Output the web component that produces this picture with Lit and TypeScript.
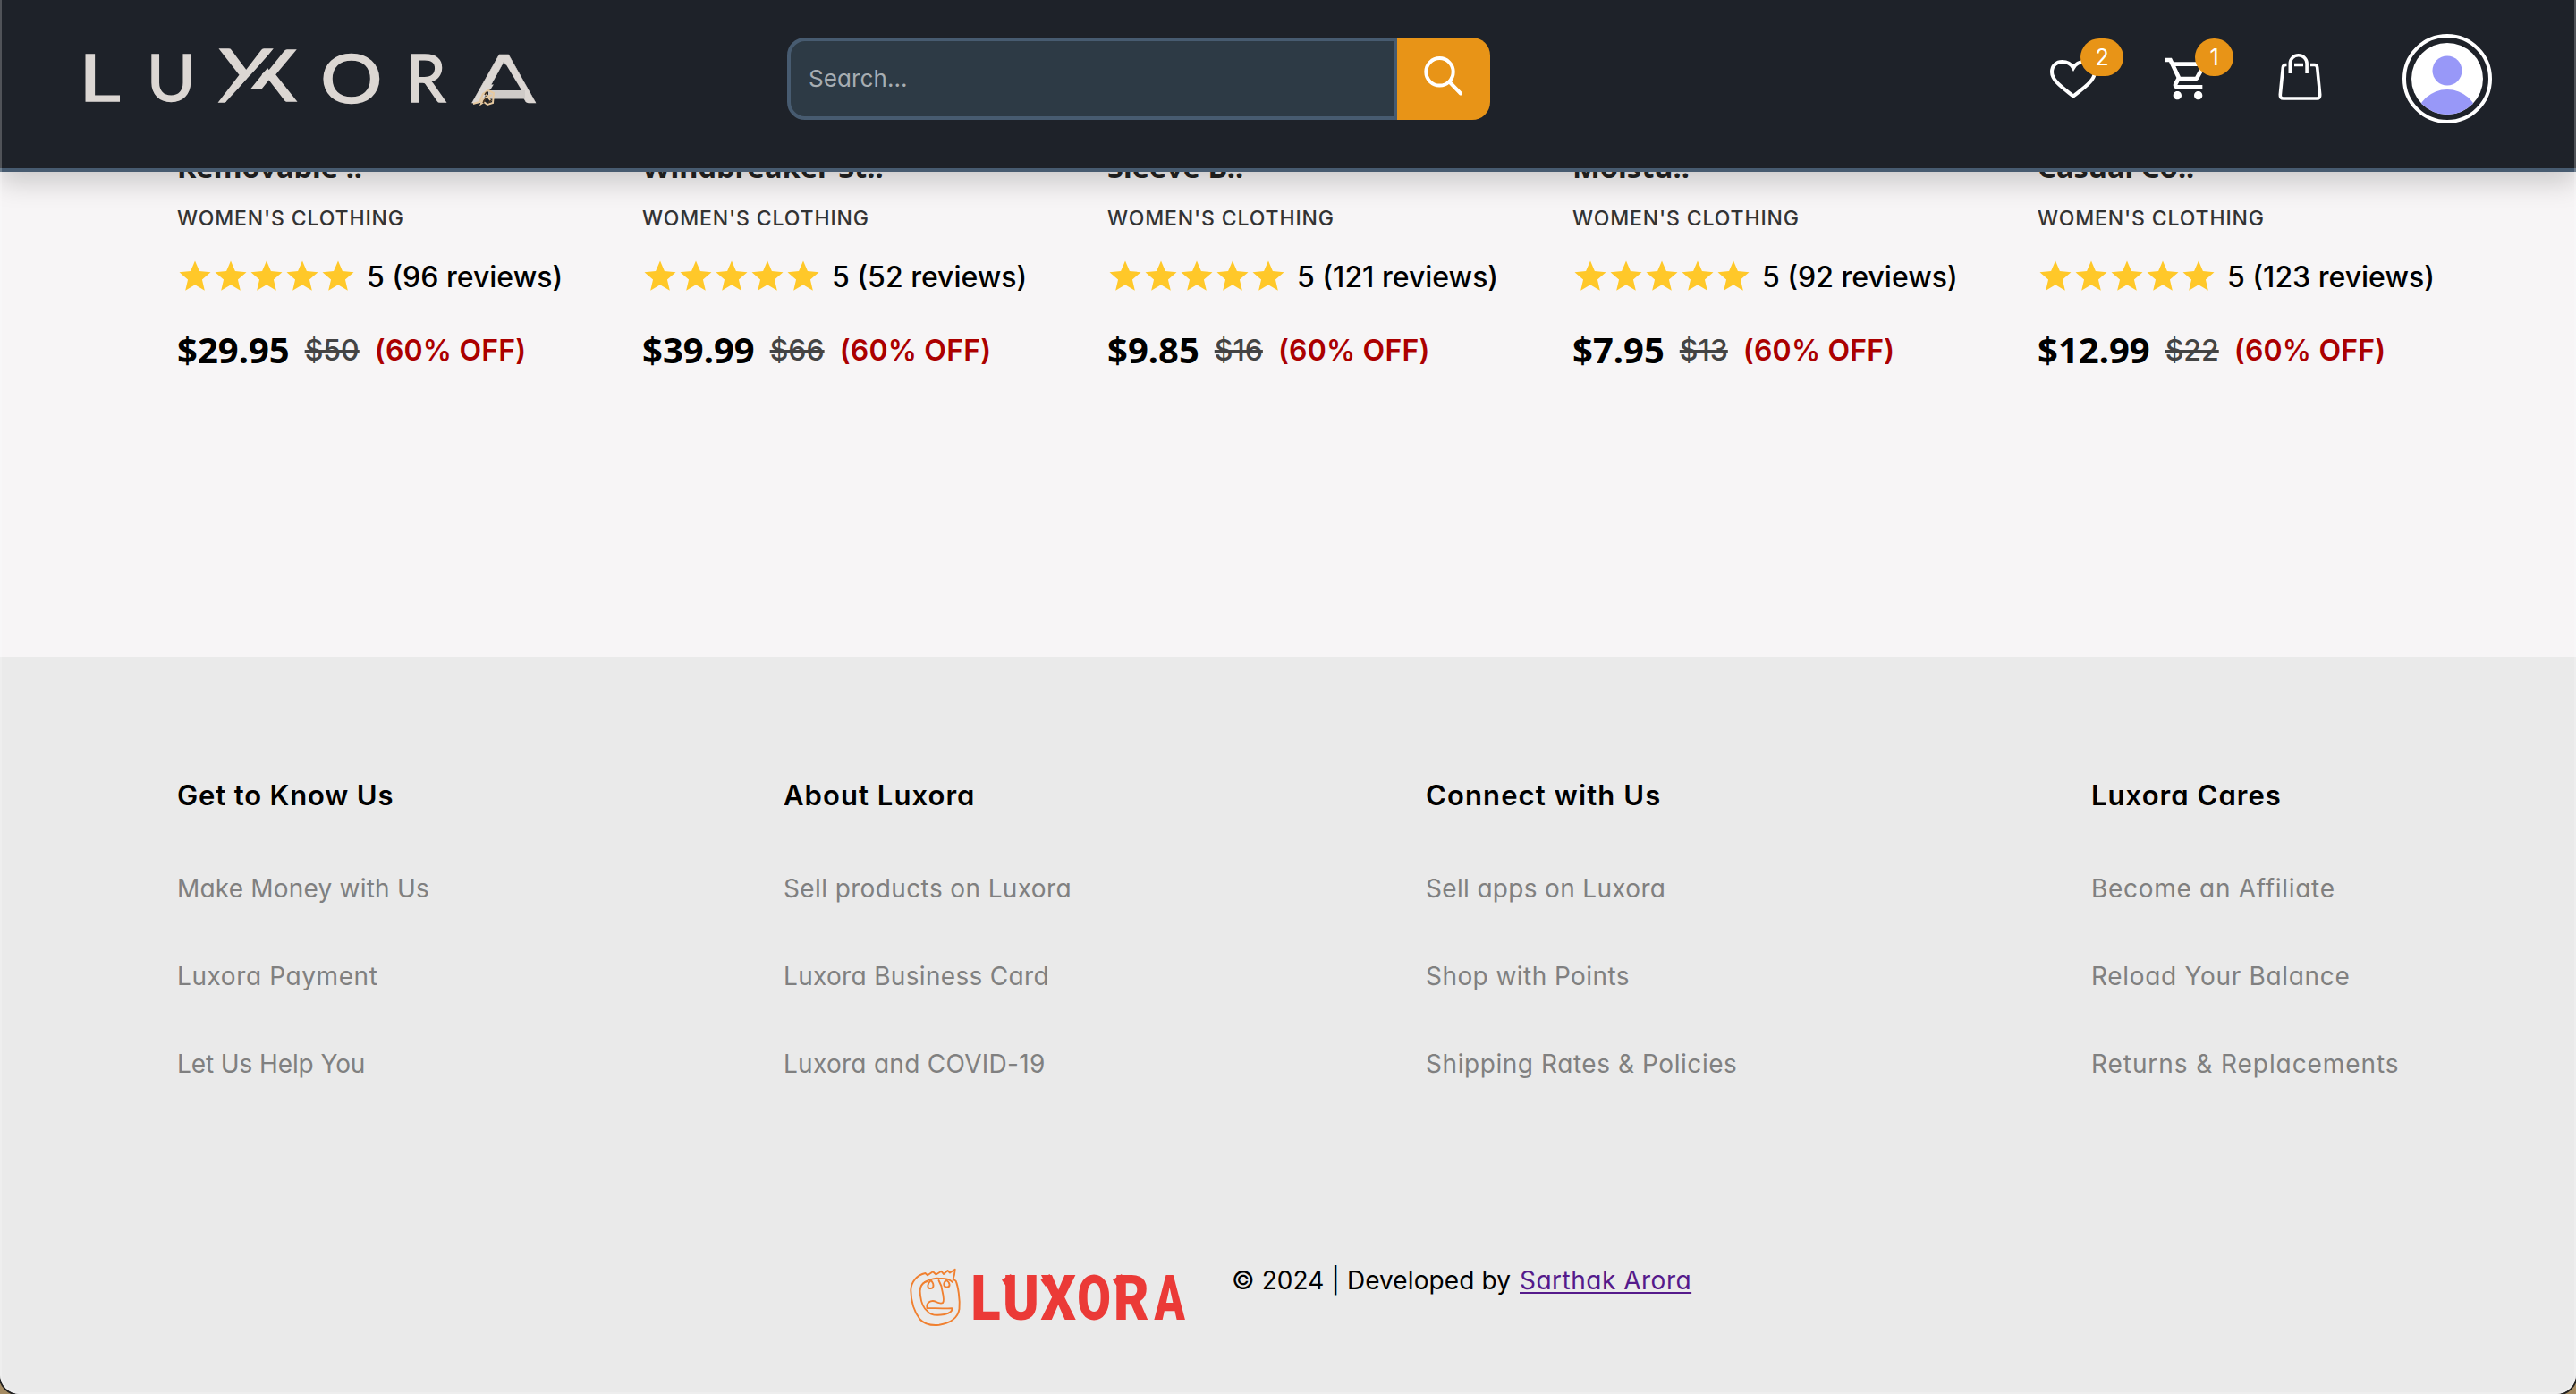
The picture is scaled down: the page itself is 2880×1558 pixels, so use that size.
import { LitElement, html, svg, css } from "lit";
import { customElement, property } from "lit/decorators.js";

interface Product {
  title: string;
  reviews: number;
  price: string;
  old: string;
}

interface Label {
  text: string;
  track: number;
}

const PRODUCTS: Product[] = [
  { title: "Removable ..", reviews: 96, price: "$29.95", old: "$50" },
  { title: "Windbreaker St..", reviews: 52, price: "$39.99", old: "$66" },
  { title: "Sleeve B..", reviews: 121, price: "$9.85", old: "$16" },
  { title: "Moistu..", reviews: 92, price: "$7.95", old: "$13" },
  { title: "Casual Co..", reviews: 123, price: "$12.99", old: "$22" },
];

const COLUMNS: { head: Label; links: Label[] }[] = [
  {
    head: { text: "Get to Know Us", track: 0.85 },
    links: [
      { text: "Make Money with Us", track: 0.2 },
      { text: "Luxora Payment", track: 0.6 },
      { text: "Let Us Help You", track: -0.1 },
    ],
  },
  {
    head: { text: "About Luxora", track: 1.05 },
    links: [
      { text: "Sell products on Luxora", track: 0.38 },
      { text: "Luxora Business Card", track: 0.32 },
      { text: "Luxora and COVID-19", track: 0.28 },
    ],
  },
  {
    head: { text: "Connect with Us", track: 1.12 },
    links: [
      { text: "Sell apps on Luxora", track: 0.33 },
      { text: "Shop with Points", track: 0.43 },
      { text: "Shipping Rates & Policies", track: 0.56 },
    ],
  },
  {
    head: { text: "Luxora Cares", track: 1.05 },
    links: [
      { text: "Become an Affiliate", track: 0.7 },
      { text: "Reload Your Balance", track: 0.68 },
      { text: "Returns & Replacements", track: 0.93 },
    ],
  },
];

const star = svg`<path d="M12 17.27 18.18 21l-1.64-7.03L22 9.24l-7.19-.61L12 2 9.19 8.63 2 9.24l5.46 4.73L5.82 21z"/>`;

@customElement("lux-header")
export class LuxHeader extends LitElement {
  static styles = css`
    :host {
      display: block;
      position: relative;
      z-index: 1;
      font-family: Inter, "Liberation Sans", sans-serif;
    }
    .bar {
      box-sizing: border-box;
      height: 192px;
      padding: 0 94px 12px 85px;
      display: flex;
      align-items: center;
      background: #1e2229;
      border-bottom: 4px solid #475b70;
      box-shadow: 0 12px 28px rgba(0, 0, 0, 0.18);
    }
    .logo {
      width: 520px;
      height: 80px;
      margin: 0 275px 6px 0;
      display: block;
      overflow: visible;
    }
    .logo-text {
      font-family: Lato, sans-serif;
      font-size: 72px;
      fill: #dcd7d3;
      stroke: #dcd7d3;
      stroke-width: 1.5px;
    }
    .logo-peak {
      stroke-width: 0.3px;
    }
    .search {
      display: flex;
      width: 786px;
      height: 92px;
    }
    .field {
      box-sizing: border-box;
      flex: 1;
      min-width: 0;
      border: 4px solid #475b70;
      border-radius: 20px 0 0 20px;
      background: #2d3a45;
      padding: 0 20px;
      font: 400 26px/84px Inter, sans-serif;
      font-feature-settings: "cv11";
      letter-spacing: 0.1px;
      color: #a7adb2;
    }
    .go {
      width: 104px;
      border-radius: 0 20px 20px 0;
      background: #e89417;
      display: flex;
    }
    .go svg {
      width: 104px;
      height: 92px;
    }
    .actions {
      display: flex;
      align-items: center;
      margin-left: auto;
    }
    .act {
      position: relative;
      height: 60px;
      display: flex;
      align-items: center;
    }
    .heart {
      width: 60px;
      margin-right: 70px;
    }
    .cart {
      width: 56px;
      margin-right: 69px;
    }
    .bag {
      width: 56px;
      margin-right: 87px;
    }
    .act svg {
      display: block;
      flex: none;
    }
    .badge {
      position: absolute;
      top: -15px;
      left: 38px;
      width: 48px;
      height: 42px;
      border-radius: 21px;
      background: #e89417;
      color: #fff;
      font-size: 25px;
      line-height: 42px;
      text-align: center;
    }
    .cart .badge {
      left: 36px;
      width: 43px;
    }
    .avatar {
      display: block;
      width: 100px;
      height: 100px;
    }
  `;

  render() {
    return html`
      <header class="bar">
        <svg class="logo" viewBox="0 0 520 80">
          <defs>
            <clipPath id="first"><path d="M150 0H230L161 76H150z" /></clipPath>
            <clipPath id="second"><path d="M243 0H260V76H218L208 54H193z" /></clipPath>
            <mask id="peak" maskUnits="userSpaceOnUse" x="0" y="0" width="520" height="80">
              <rect width="520" height="80" fill="#fff" />
              <path d="M480.700 27L462.500 56.500H498.500z" fill="#000" />
            </mask>
          </defs>
          <g class="logo-text">
            <text transform="matrix(1.25 0 0 1 3.2 67.5)">L</text>
            <text transform="matrix(1.03 0 0 1 79 68)">U</text>
            <g clip-path="url(#first)"><text transform="matrix(1.31 0 0 1.14 159.5 68.5)">X</text></g>
            <g clip-path="url(#second)"><text transform="matrix(1.33 0 0 1.1 184.5 67.5)">X</text></g>
            <text transform="matrix(1.2 0 0 1.04 273.2 70)">O</text>
            <text transform="matrix(0.98 0 0 1.01 369.3 69.3)">R</text>
            <g mask="url(#peak)"><text class="logo-peak" transform="matrix(1.48 0 0 1.05 442.3 70)">A</text></g>
          </g>
          <rect x="461" y="56" width="41" height="9.500" fill="#cfcbc8" />
          <path
            d="M444 71l7-2 4-9 6-4 6 3-1 11-6 2-4-3-3 2 2-5 5-3 4 5M458 60l3 3 4-2M451 67l5 3"
            fill="none"
            stroke="#e6c9a0"
            stroke-width="2"
          />
          <path d="M455 70l3-5M461 70l3-3M459 58l-2 3" stroke="#4a3520" stroke-width="1.600" />
        </svg>
        <div class="search">
          <div class="field">Search...</div>
          <div class="go">
            <svg viewBox="0 0 104 92" fill="none" stroke="#fff" stroke-width="4" stroke-linecap="round">
              <circle cx="47.500" cy="38.300" r="15.200" />
              <path d="M58.500 49.500L71 62.500" />
            </svg>
          </div>
        </div>
        <div class="actions">
          <div class="act heart">
            <svg width="60" height="60" viewBox="0 0 60 60" fill="none" stroke="#fff" stroke-width="4">
              <path
                d="M30 49.500C20 41.500 6 32.500 6 22.500 6 15 11.500 11 17.500 11c5.500 0 10 2.500 12.500 7 2.500-4.500 7-7 12.500-7C48.500 11 54 15 54 22.500 54 32.500 40 41.500 30 49.500z"
              />
            </svg>
            <span class="badge">2</span>
          </div>
          <div class="act cart">
            <svg width="56" height="56" viewBox="0 0 24 24" fill="#fff">
              <path
                d="M15.550 13c.750 0 1.410-.410 1.750-1.030l3.580-6.490c.370-.660-.110-1.480-.870-1.480H5.210l-.940-2H1v2h2l3.600 7.590-1.350 2.440C4.520 15.370 5.480 17 7 17h12v-2H7l1.100-2h7.450zM6.160 6h12.150l-2.760 5H8.530L6.160 6zM7 18c-1.100 0-1.990.900-1.990 2S5.900 22 7 22s2-.900 2-2-.900-2-2-2zm10 0c-1.100 0-1.990.900-1.990 2s.890 2 1.990 2 2-.900 2-2-.900-2-2-2z"
              />
            </svg>
            <span class="badge">1</span>
          </div>
          <div class="act bag">
            <svg width="56" height="60" viewBox="0 0 56 60" fill="none" stroke="#fff" stroke-width="3.600">
              <path
                d="M13.500 14.500H12.500Q9.600 14.500 9.300 17.500L6.300 48Q6 52 9.800 52H47.200Q51 52 50.700 48L47.700 17.500Q47.400 14.500 44.500 14.500H40M22 14.500H32M17.300 24V13a9.400 9.200 0 0 1 18.800 0V24"
              />
            </svg>
          </div>
          <svg class="avatar" viewBox="0 0 100 100">
            <defs>
              <clipPath id="disc"><circle cx="50" cy="50" r="40" /></clipPath>
            </defs>
            <circle cx="50" cy="50" r="48" fill="none" stroke="#fff" stroke-width="4" />
            <circle cx="50" cy="50" r="40" fill="#fff" />
            <g clip-path="url(#disc)" fill="#9898f8">
              <circle cx="50" cy="41" r="16.500" />
              <ellipse cx="50" cy="94" rx="34" ry="32" />
            </g>
          </svg>
        </div>
      </header>
    `;
  }
}

@customElement("lux-product")
export class LuxProduct extends LitElement {
  @property({ attribute: false }) item!: Product;

  static styles = css`
    :host {
      display: block;
      font-family: Inter, "Liberation Sans", sans-serif;
      white-space: nowrap;
    }
    .title {
      font: 700 32.6px/44px "Noto Sans", "Open Sans", sans-serif;
      color: #222;
    }
    .cat {
      margin-top: 20px;
      font-weight: 500;
      font-size: 23px;
      line-height: 30px;
      letter-spacing: 0.86px;
      color: #333;
    }
    .rating {
      margin-top: 29px;
      height: 42px;
      display: flex;
      align-items: center;
      font-weight: 500;
      font-size: 32px;
      color: #000;
    }
    .rating svg {
      width: 42px;
      height: 42px;
      margin: 0 -1px;
      fill: #ffc829;
    }
    .count {
      margin-left: 12px;
    }
    .prices {
      margin-top: 34px;
      height: 54px;
      display: flex;
      align-items: center;
      gap: 17px;
      font-size: 32px;
    }
    .now {
      font: 700 40px/54px "Noto Sans", "Open Sans", sans-serif;
      color: #000;
    }
    .old {
      font-weight: 500;
      color: #444;
      text-decoration: line-through;
    }
    .off {
      font-weight: 600;
      letter-spacing: 0.2px;
      color: #ab0000;
    }
  `;

  render() {
    const p = this.item;
    return html`
      <div class="title">${p.title}</div>
      <div class="cat">WOMEN'S CLOTHING</div>
      <div class="rating">
        ${[0, 1, 2, 3, 4].map(() => html`<svg viewBox="0 0 24 24">${star}</svg>`)}
        <span class="count">5 (${p.reviews} reviews)</span>
      </div>
      <div class="prices">
        <span class="now">${p.price}</span>
        <span class="old">${p.old}</span>
        <span class="off">(60% OFF)</span>
      </div>
    `;
  }
}

@customElement("lux-footer")
export class LuxFooter extends LitElement {
  static styles = css`
    :host {
      display: block;
      flex: 1;
      background: #eaeaea;
      font-family: Inter, "Liberation Sans", sans-serif;
      font-feature-settings: "cv11";
      white-space: nowrap;
    }
    .cols {
      display: grid;
      grid-template-columns: 678px 718px 744px auto;
      padding: 132px 0 0 198px;
    }
    .col {
      display: flex;
      flex-direction: column;
      align-items: flex-start;
      gap: 56px;
    }
    .head {
      margin-bottom: 4px;
      font-weight: 600;
      font-size: 31px;
      line-height: 46px;
      color: #000;
    }
    .link {
      font-size: 28px;
      line-height: 42px;
      color: #808080;
    }
    .base {
      display: flex;
      align-items: flex-start;
      gap: 37px;
      padding: 194px 0 0 1010px;
    }
    .mark {
      width: 330px;
      height: 90px;
      display: block;
      overflow: visible;
    }
    .mark-text {
      font-family: Roboto, sans-serif;
      font-weight: 900;
      font-size: 70px;
      fill: #eb3a37;
    }
    .copy {
      margin-top: 6px;
      display: flex;
      font-size: 28px;
      line-height: 42px;
      letter-spacing: 0.1px;
      color: #000;
    }
    .author {
      margin-left: 10px;
      letter-spacing: 0.5px;
      color: #551a8b;
      text-decoration: underline;
      text-decoration-thickness: 2px;
      text-underline-offset: 3px;
      text-decoration-skip-ink: none;
    }
  `;

  private label(kind: string, l: Label) {
    return html`<span class=${kind} style="letter-spacing:${l.track}px">${l.text}</span>`;
  }

  render() {
    return html`
      <div class="cols">
        ${COLUMNS.map(
          (c) => html`<div class="col">${this.label("head", c.head)}${c.links.map((l) => this.label("link", l))}</div>`
        )}
      </div>
      <div class="base">
        <svg class="mark" viewBox="0 0 330 90">
          <g fill="none" stroke="#f08030" stroke-width="1.900" stroke-linejoin="round" stroke-linecap="round">
            <path
              d="M57.700 14.700L52 18.500 49.500 16 45 20 42.500 16.800 36.500 20.500 33 17.200 27 21.300 24.500 19C15 21 8.500 29 8.300 38 8.500 50 12 62 18.500 70.500 24 76.500 33 77.500 40 76.800 52 75 61 69 62.500 59 63.500 48 61 33 58.500 27.500L55.500 25.800C57 22 57.500 18 57.700 14.700z"
            />
            <path
              d="M27 28C18 30 18 39 19 44 20 52 22.500 58 26.500 61 30 66 38 66.500 46 65 52 64 55 61 54.300 58.300 45 58.500 33 58 26.500 58 25.500 52 30 49.500 34.500 50.200 37 51.500 41 53.500 44 52.200 47 49 43 39 42.500 33.500L39.500 27"
            />
            <path
              d="M24 29C30 25 37 24.500 40 25 46 24.500 51 25 55 29M31 27C27 30 26 35.500 29.500 36 34 36.500 35 32 31 27M48 27C44 30 44.500 34.500 49 34.800 53 34 52 29 48 27"
            />
          </g>
          <g class="mark-text">
            <text transform="matrix(0.88 0 0 1 75.300 71)">L</text>
            <text transform="matrix(0.88 0 0 1 111 71)">U</text>
            <text transform="matrix(0.88 0 0 1 153.500 71)">X</text>
            <text transform="matrix(0.78 0 0 1 194.300 71)">O</text>
            <text transform="matrix(0.87 0 0 1 235 71)">R</text>
            <text transform="matrix(0.72 0 0 1 280.500 71)">A</text>
          </g>
          <g fill="#eb3a37">
            <path d="M110 26.500L120 20L124 27L114.500 33z" />
            <path d="M153.500 26.500L163.500 20L167 27L159 34z" />
            <path d="M234 26.500L244 20L247 27L238.500 33z" />
          </g>
        </svg>
        <div class="copy">
          <span>© 2024 | Developed by</span>
          <a class="author">Sarthak Arora</a>
        </div>
      </div>
    `;
  }
}

@customElement("app-root")
export class AppRoot extends LitElement {
  static styles = css`
    :host {
      display: block;
      height: 1558px;
      background: #a68c63;
      overflow: hidden;
    }
    .window {
      position: relative;
      box-sizing: border-box;
      height: 1558px;
      display: flex;
      flex-direction: column;
      background: #f7f5f6;
      border-radius: 0 0 22px 22px;
      overflow: hidden;
      box-shadow: 0 0 0 2px #222;
    }
    .window::after {
      content: "";
      position: absolute;
      inset: 0;
      z-index: 2;
      border: 2px solid rgba(255, 255, 255, 0.22);
      border-top: 0;
      border-radius: 0 0 22px 22px;
      pointer-events: none;
    }
    .products {
      flex: none;
      box-sizing: border-box;
      height: 569px;
      margin-top: -27px;
      padding-left: 198px;
      display: grid;
      grid-template-columns: repeat(5, 520px);
      align-items: start;
    }
  `;

  render() {
    return html`
      <div class="window">
        <lux-header></lux-header>
        <main class="products">${PRODUCTS.map((p) => html`<lux-product .item=${p}></lux-product>`)}</main>
        <lux-footer></lux-footer>
      </div>
    `;
  }
}
